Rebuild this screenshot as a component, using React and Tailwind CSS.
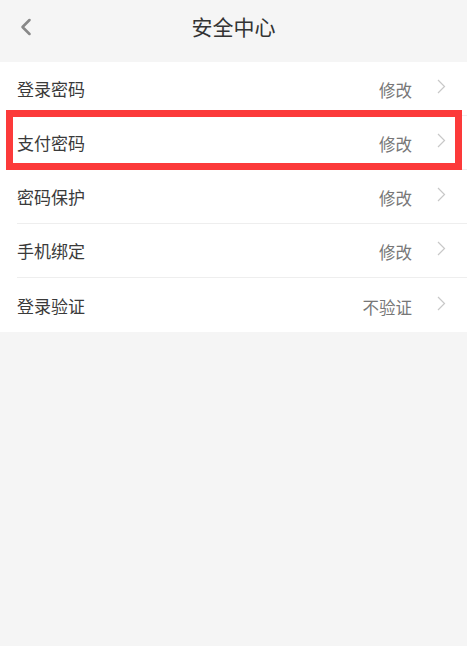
import { ChevronLeft } from "lucide-react";

const rows = [
  { label: "登录密码", value: "修改" },
  { label: "支付密码", value: "修改" },
  { label: "密码保护", value: "修改" },
  { label: "手机绑定", value: "修改" },
  { label: "登录验证", value: "不验证" },
];

function Arrow() {
  return (
    <svg width="9" height="15" viewBox="0 0 9 15" fill="none" className="ml-[25px] -mt-[4px]">
      <path d="M1 1l6.5 6.5L1 14" stroke="#c8c8c8" strokeWidth="1.2" />
    </svg>
  );
}

export default function App() {
  return (
    <div
      className="relative w-[467px] h-[646px] bg-[#f5f5f5]"
      style={{ fontFamily: '"Noto Sans CJK SC", "Noto Sans", sans-serif' }}
    >
      <header className="relative h-[62px] flex items-center justify-center">
        <ChevronLeft className="absolute left-[12px] top-[13px] w-[28px] h-[28px] text-[#888]" strokeWidth={2.2} />
        <h1 className="text-[21px] text-[#333] -mt-[8px]">安全中心</h1>
      </header>
      <ul className="bg-white">
        {rows.map((r, i) => (
          <li key={r.label} className="pl-[17px]">
            <div
              className={
                "h-[54px] flex items-center pr-[21px] " +
                (i < rows.length - 1 ? "border-b border-[#eeeeee]" : "")
              }
            >
              <span className="flex-1 text-[17px] text-[#3a3a3a] leading-none">{r.label}</span>
              <span className="text-[16.5px] text-[#777] leading-none mt-[4px]">{r.value}</span>
              <Arrow />
            </div>
          </li>
        ))}
      </ul>
      <div className="absolute left-[6px] top-[110px] w-[456px] h-[60px] border-[7px] border-[#fc3a3a]" />
    </div>
  );
}
